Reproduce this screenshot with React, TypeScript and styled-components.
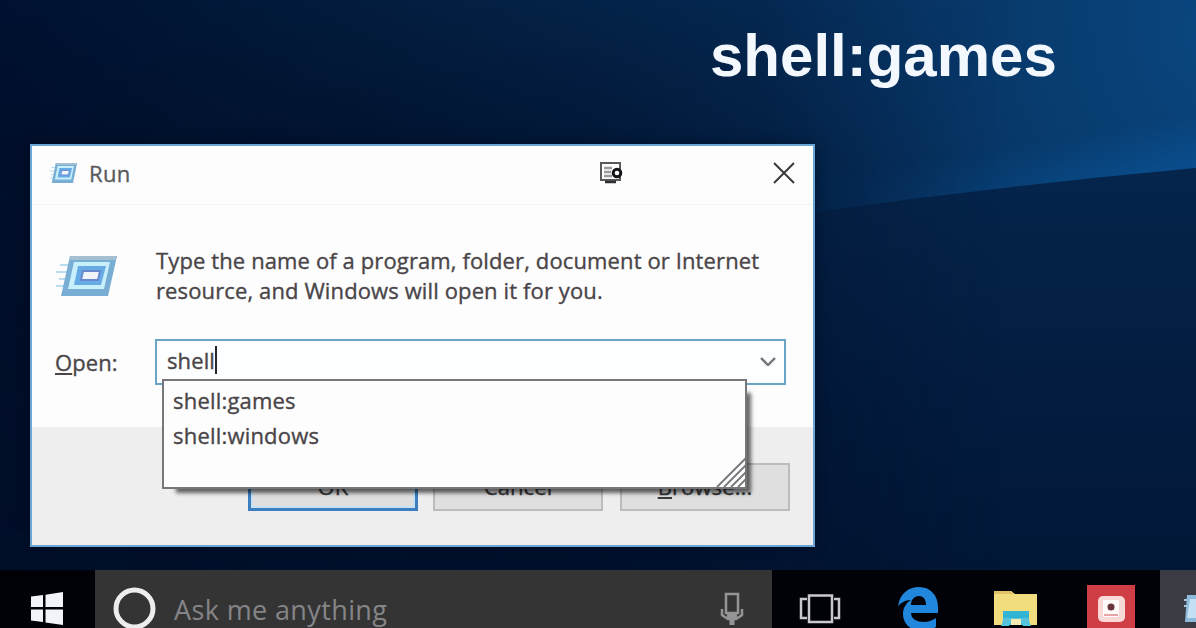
import React from "react";
import styled, { createGlobalStyle } from "styled-components";

const GlobalStyle = createGlobalStyle`
  * { box-sizing: border-box; }
  body { margin: 0; overflow: hidden; font-family: "Open Sans", "Noto Sans", sans-serif; }
`;

const Desktop = styled.div`
  position: relative;
  width: 1196px;
  height: 628px;
  overflow: hidden;
  display: flex;
  flex-direction: column;
  justify-content: flex-end;
  background: #031a3a;
`;

const Wallpaper = styled.svg`
  position: absolute;
  inset: 0;
`;

const Caption = styled.h1`
  position: absolute;
  left: 710px;
  top: 22px;
  margin: 0;
  font: bold 60px/68px "Liberation Sans", Arial, sans-serif;
  color: #f3f8ff;
  white-space: nowrap;
`;

const Dialog = styled.section`
  position: absolute;
  left: 30px;
  top: 144px;
  width: 785px;
  height: 403px;
  display: flex;
  flex-direction: column;
  border: 2px solid #69a6d6;
  background: #fdfdfe;
  box-shadow: 0 0 12px rgba(0, 4, 16, 0.4);
  -webkit-text-stroke: 0.35px currentColor;
`;

const TitleBar = styled.header`
  height: 59px;
  display: flex;
  align-items: center;
  padding: 0 17px 4px 17px;
  border-bottom: 1px solid #f3f3f5;
`;

const TitleText = styled.span`
  flex: 1;
  margin-left: 11px;
  font-size: 22px;
  line-height: 30px;
  letter-spacing: 0.3px;
  color: #5a5a5d;
`;

const TitleButton = styled.span<{ $gap?: number }>`
  display: flex;
  margin-right: ${(p) => p.$gap ?? 0}px;
`;

const Body = styled.div`
  height: 222px;
  padding: 41px 27px 0 23px;
`;

const Intro = styled.div`
  display: flex;
  align-items: flex-start;
`;

const IntroIcon = styled.div`
  width: 101px;
  padding-top: 8px;
`;

const Message = styled.p`
  margin: 0;
  font-size: 22px;
  line-height: 29.5px;
  letter-spacing: 0.12px;
  white-space: nowrap;
  color: #4a4548;
`;

const OpenRow = styled.label`
  display: flex;
  align-items: center;
  margin-top: 34px;
`;

const OpenLabel = styled.span`
  width: 100px;
  font-size: 22px;
  line-height: 30px;
  letter-spacing: 0.1px;
  color: #4a4548;
`;

const Key = styled.u`
  text-decoration-thickness: 2px;
  text-underline-offset: 2px;
`;

const Combo = styled.div`
  width: 631px;
  height: 46px;
  display: flex;
  align-items: center;
  justify-content: space-between;
  padding: 0 7px 4px 10px;
  border: 2px solid #6ba5c5;
  background: #fcfeff;
`;

const Typed = styled.span`
  display: flex;
  align-items: center;
  font-size: 22px;
  line-height: 30px;
  letter-spacing: 0.1px;
  color: #4a4548;
`;

const Caret = styled.span`
  width: 2px;
  height: 28px;
  background: #28282c;
`;

const Suggestions = styled.ul`
  position: absolute;
  z-index: 2;
  left: 130px;
  top: 233px;
  width: 585px;
  height: 110px;
  margin: 0;
  padding: 3px 9px;
  list-style: none;
  border: 2px solid #77777a;
  background: #fdfdfe;
  box-shadow: 9px 9px 4px -5px rgba(0, 0, 0, 0.6);
`;

const Suggestion = styled.li`
  height: 35px;
  font-size: 22px;
  line-height: 33px;
  letter-spacing: 0.2px;
  color: #4a4548;
`;

const Grip = styled.svg`
  position: absolute;
  right: -2px;
  bottom: -1px;
`;

const Footer = styled.footer`
  flex: 1;
  display: flex;
  gap: 17px;
  justify-content: flex-end;
  padding: 36px 23px 0 0;
  background: #eeeeef;
`;

const PushButton = styled.button<{ $primary?: boolean }>`
  width: 170px;
  height: 48px;
  margin-right: ${(p) => (p.$primary ? "-2px" : "0")};
  padding: 0 0 2px;
  border: ${(p) => (p.$primary ? "3px solid #3b7fc0" : "2px solid #bcbcbe")};
  background: #dfdfe0;
  box-shadow: ${(p) => (p.$primary ? "inset 0 0 0 2px #c7e2f7" : "none")};
  font: 22px/30px "Open Sans", "Noto Sans", sans-serif;
  letter-spacing: 0.1px;
  color: #39393c;
`;

const Taskbar = styled.nav`
  position: relative;
  height: 58px;
  display: flex;
  background: #010108;
`;

const StartButton = styled.div`
  width: 95px;
  padding: 22px 0 0 30px;
`;

const Search = styled.div`
  width: 677px;
  display: flex;
  align-items: flex-start;
  padding: 16px 28px 0 18px;
  background: #343435;
`;

const SearchText = styled.span`
  flex: 1;
  margin-left: 18px;
  padding-top: 7px;
  font-size: 27px;
  line-height: 34px;
  letter-spacing: 0.38px;
  color: #858587;
`;

const Mic = styled.span`
  padding-top: 6px;
`;

const TaskItem = styled.div<{ $width: number; $active?: boolean }>`
  width: ${(p) => p.$width}px;
  flex: none;
  display: flex;
  align-items: flex-start;
  justify-content: ${(p) => (p.$active ? "flex-end" : "center")};
  background: ${(p) => (p.$active ? "#3a3b43" : "transparent")};
`;

function RunGlyph({ width, height }: { width: number; height: number }) {
  return (
    <svg width={width} height={height} viewBox="0 0 64 44" preserveAspectRatio="none">
      <path d="M5 11h12M1 18h14M4 25h10M1 32h11" stroke="#b9dcf2" strokeWidth="2" />
      <path d="M15 2h47l-9 40H6z" fill="#78aed3" />
      <path d="M15 2h47l-1 4H14z" fill="#a3bfd0" />
      <path d="M19 8h36l-6 27H13z" fill="#c8effc" />
      <path d="M23 12h28l-5 19H19z" fill="#68abe4" />
      <path d="M28 17h17l-2 9H26z" fill="#f2f4fb" stroke="#6688cf" strokeWidth="2" />
    </svg>
  );
}

export default function App() {
  return (
    <Desktop>
      <GlobalStyle />
      <Wallpaper width="1196" height="628" viewBox="0 0 1196 628">
        <defs>
          <linearGradient id="sky" x1="0" y1="0.2" x2="1" y2="0">
            <stop offset="0" stopColor="#001030" />
            <stop offset="0.3" stopColor="#031c3c" />
            <stop offset="0.6" stopColor="#05264e" />
            <stop offset="1" stopColor="#073664" />
          </linearGradient>
          <radialGradient id="glow" gradientUnits="userSpaceOnUse" cx="1220" cy="40" r="460">
            <stop offset="0" stopColor="#0c5090" stopOpacity="0.6" />
            <stop offset="1" stopColor="#0c5090" stopOpacity="0" />
          </radialGradient>
          <linearGradient id="edge" gradientUnits="userSpaceOnUse" x1="1000" y1="192" x2="993" y2="145">
            <stop offset="0" stopColor="#0b5ba3" stopOpacity="0.5" />
            <stop offset="1" stopColor="#0b5ba3" stopOpacity="0" />
          </linearGradient>
          <linearGradient id="fade" x1="0" y1="0" x2="1" y2="0">
            <stop offset="0" stopColor="#000" />
            <stop offset="1" stopColor="#fff" />
          </linearGradient>
          <mask id="fadeMask">
            <rect x="800" y="100" width="396" height="130" fill="url(#fade)" />
          </mask>
          <linearGradient id="ground" x1="0" y1="0" x2="0" y2="1">
            <stop offset="0" stopColor="#05254c" />
            <stop offset="0.5" stopColor="#031c3f" />
            <stop offset="1" stopColor="#021634" />
          </linearGradient>
          <linearGradient id="shade" x1="0" y1="0" x2="0" y2="1">
            <stop offset="0" stopColor="#000d26" stopOpacity="0" />
            <stop offset="0.25" stopColor="#000d26" stopOpacity="0.6" />
            <stop offset="1" stopColor="#000d26" stopOpacity="0.9" />
          </linearGradient>
          <linearGradient id="shadeFade" x1="0" y1="0" x2="1" y2="0">
            <stop offset="0" stopColor="#fff" />
            <stop offset="0.6" stopColor="#ccc" />
            <stop offset="1" stopColor="#000" />
          </linearGradient>
          <mask id="shadeMask">
            <rect width="1000" height="628" fill="url(#shadeFade)" />
          </mask>
        </defs>
        <rect width="1196" height="628" fill="url(#sky)" />
        <rect width="1196" height="628" fill="url(#glow)" />
        <path d="M800 100H1196V168Q1000 186 800 214Z" fill="url(#edge)" mask="url(#fadeMask)" />
        <path d="M60 530V300L800 214Q1000 186 1196 168V628H0V530Z" fill="url(#ground)" />
        <rect width="1000" height="628" fill="url(#shade)" mask="url(#shadeMask)" />
      </Wallpaper>

      <Caption>shell:games</Caption>

      <Dialog>
        <TitleBar>
          <RunGlyph width={29} height={22} />
          <TitleText>Run</TitleText>
          <TitleButton $gap={149}>
            <svg width="25" height="24" viewBox="0 0 25 24" fill="none">
              <path d="M3 2h19v17H3z" stroke="#59595c" strokeWidth="2" />
              <path d="M6 7h8M6 11h7M6 15h8" stroke="#9a9a9d" strokeWidth="2.4" />
              <path d="M7 21h11" stroke="#303034" strokeWidth="2.5" />
              <circle cx="19" cy="12" r="3.8" fill="#fff" stroke="#151519" strokeWidth="3" />
            </svg>
          </TitleButton>
          <TitleButton>
            <svg width="24" height="24" viewBox="0 0 24 24">
              <path d="M2 2L22 22M22 2L2 22" stroke="#3a3a3d" strokeWidth="2" />
            </svg>
          </TitleButton>
        </TitleBar>

        <Body>
          <Intro>
            <IntroIcon>
              <RunGlyph width={64} height={44} />
            </IntroIcon>
            <Message>
              Type the name of a program, folder, document or Internet
              <br />
              resource, and Windows will open it for you.
            </Message>
          </Intro>
          <OpenRow>
            <OpenLabel>
              <Key>O</Key>pen:
            </OpenLabel>
            <Combo>
              <Typed>
                shell
                <Caret />
              </Typed>
              <svg width="18" height="12" viewBox="0 0 18 12" fill="none">
                <path d="M2 4l7 7 7-7" stroke="#747477" strokeWidth="2.4" />
              </svg>
            </Combo>
          </OpenRow>
        </Body>

        <Footer>
          <PushButton $primary>OK</PushButton>
          <PushButton>Cancel</PushButton>
          <PushButton>
            <Key>B</Key>rowse...
          </PushButton>
        </Footer>

        <Suggestions>
          <Suggestion>shell:games</Suggestion>
          <Suggestion>shell:windows</Suggestion>
          <Grip width="32" height="32" viewBox="0 0 32 32">
            <path d="M2 31L31 2M9 31L31 9M16 31L31 16M23 31L31 23" stroke="#77777a" strokeWidth="1.8" />
          </Grip>
        </Suggestions>
      </Dialog>

      <Taskbar>
        <StartButton>
          <svg width="34" height="34" viewBox="0 0 34 34" fill="#f2f4f8">
            <path d="M1 4.500L13 3V15H1zM15.500 2.700L33 0V15H15.500zM1 17.500H13V30L1 28.500zM15.500 17.500H33V33L15.500 30.500z" />
          </svg>
        </StartButton>
        <Search>
          <svg width="43" height="44" viewBox="0 0 43 44">
            <circle cx="21.500" cy="22.500" r="18.500" fill="none" stroke="#ededee" strokeWidth="5" />
          </svg>
          <SearchText>Ask me anything</SearchText>
          <Mic>
            <svg width="24" height="34" viewBox="0 0 24 34" fill="none" stroke="#949496" strokeWidth="2.500">
              <path d="M6 2h12v19H6z" />
              <path d="M2 17v6l6 4h8l6-4v-6" />
              <path d="M7 24h10M12 25v8" strokeWidth="5" />
            </svg>
          </Mic>
        </Search>
        <TaskItem $width={96}>
          <svg width="42" height="58" viewBox="0 0 42 58" fill="none" stroke="#c9c9cd" strokeWidth="2.500">
            <path d="M10 25.500h23V52H10zM8 29H2v19h6M35 29h5v19h-5" />
          </svg>
        </TaskItem>
        <TaskItem $width={100}>
          <svg width="42" height="58" viewBox="0 0 42 58">
            <path
              d="M1 36C3 23 12 17 22 17C34 17 41 26 41 37V43H14C14 49 20 52 27 52C32 52 36 50 39 48V57C35 59 30 61 25 61C14 61 6 54 6 44C6 38 9 33 14 30C8 30 4 33 1 36ZM14 35H29C29 29 26 26 22 26C17 26 14 30 14 35Z"
              fill="#2187dc"
              fillRule="evenodd"
            />
          </svg>
        </TaskItem>
        <TaskItem $width={94}>
          <svg width="44" height="58" viewBox="0 0 44 58">
            <path d="M1 21h17l4 3h22v31H1z" fill="#f1dc7e" />
            <path d="M1 21h17l3 3H1z" fill="#e2c267" />
            <path d="M10 41h26v14H10z" fill="#34b4d5" />
            <path d="M8 56l3-8h24l3 8h-8l-3-6H19l-3 6z" fill="#55c4dc" />
            <path d="M18 49h10v6H18z" fill="#f6ebb0" />
          </svg>
        </TaskItem>
        <TaskItem $width={98}>
          <svg width="48" height="58" viewBox="0 0 48 58">
            <path d="M0 15h48v43H0z" fill="#cf3d45" />
            <rect x="11" y="26" width="27" height="26" rx="5" fill="#f8d9d8" />
            <rect x="16" y="30" width="16" height="17" rx="1" fill="#fffafa" />
            <circle cx="24" cy="37" r="3.500" fill="#68333a" />
            <path d="M17 45h14" stroke="#e8a5a5" strokeWidth="2" />
          </svg>
        </TaskItem>
        <TaskItem $width={36} $active>
          <svg width="12" height="58" viewBox="0 0 12 58">
            <path d="M3 25h9v27H1z" fill="#8db9da" />
            <path d="M6 29h6v19H3z" fill="#c5e0f4" />
            <path d="M0 30h3M0 36h3" stroke="#a7c7dd" strokeWidth="2" />
          </svg>
        </TaskItem>
      </Taskbar>
    </Desktop>
  );
}
